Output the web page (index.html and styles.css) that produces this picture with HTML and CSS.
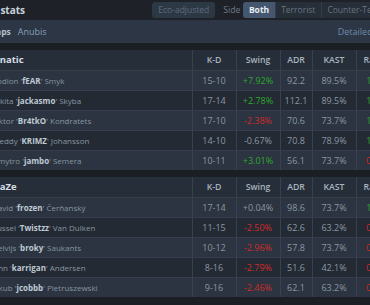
FILE: index.html
```html
<!DOCTYPE html>
<html>
<head>
<meta charset="utf-8">
<link rel="stylesheet" href="styles.css">
</head>
<body>
<div class="page">
  <div class="topbar">
    <div class="title">Map stats</div>
    <div class="controls">
      <span class="eco">Eco-adjusted</span>
      <span class="side">Side</span>
      <div class="group">
        <span class="seg active">Both</span>
        <span class="seg">Terrorist</span>
        <span class="seg">Counter-Terrorist</span>
      </div>
    </div>
  </div>
  <div class="mapsrow">
    <span class="maps-label">Maps</span>
    <span class="map">Anubis</span>
    <span class="detailed">Detailed stats</span>
  </div>
  <div class="gap"></div>
  <table class="team">
    <colgroup><col class="c-name"><col class="c-w"><col class="c-w"><col class="c-adr"><col class="c-w"><col class="c-w"></colgroup>
    <tr class="head"><th class="teamname">Fnatic</th><th>K-D</th><th>Swing</th><th>ADR</th><th>KAST</th><th class="rating">Rating 3.0</th></tr>
    <tr class="light"><td class="name">Rodion '<b>fEAR</b>' Smyk</td><td>15-10</td><td class="pos">+7.92%</td><td>92.2</td><td>89.5%</td><td class="rating pos">1.42</td></tr>
    <tr class="dark"><td class="name">Nikita '<b>jackasmo</b>' Skyba</td><td>17-14</td><td class="pos">+2.78%</td><td>112.1</td><td>89.5%</td><td class="rating pos">1.31</td></tr>
    <tr class="light"><td class="name">Viktor '<b>Br4tkO</b>' Kondratets</td><td>17-10</td><td class="neg">-2.38%</td><td>70.6</td><td>73.7%</td><td class="rating pos">1.18</td></tr>
    <tr class="dark"><td class="name">Freddy '<b>KRIMZ</b>' Johansson</td><td>14-10</td><td>-0.67%</td><td>70.8</td><td>78.9%</td><td class="rating pos">1.12</td></tr>
    <tr class="light"><td class="name">Dmytro '<b>jambo</b>' Semera</td><td>10-11</td><td class="pos">+3.01%</td><td>56.1</td><td>73.7%</td><td class="rating neg">0.95</td></tr>
  </table>
  <div class="gap"></div>
  <table class="team">
    <colgroup><col class="c-name"><col class="c-w"><col class="c-w"><col class="c-adr"><col class="c-w"><col class="c-w"></colgroup>
    <tr class="head"><th class="teamname">FaZe</th><th>K-D</th><th>Swing</th><th>ADR</th><th>KAST</th><th class="rating">Rating 3.0</th></tr>
    <tr class="light"><td class="name">David '<b>frozen</b>' Čerňanský</td><td>17-14</td><td>+0.04%</td><td>98.6</td><td>73.7%</td><td class="rating pos">1.08</td></tr>
    <tr class="dark"><td class="name">Russel '<b>Twistzz</b>' Van Dulken</td><td>11-15</td><td class="neg">-2.50%</td><td>62.6</td><td>63.2%</td><td class="rating neg">0.88</td></tr>
    <tr class="light"><td class="name">Helvijs '<b>broky</b>' Saukants</td><td>10-12</td><td class="neg">-2.96%</td><td>57.8</td><td>73.7%</td><td class="rating neg">0.86</td></tr>
    <tr class="dark"><td class="name">Finn '<b>karrigan</b>' Andersen</td><td>8-16</td><td class="neg">-2.79%</td><td>51.6</td><td>42.1%</td><td class="rating neg">0.62</td></tr>
    <tr class="light"><td class="name">Jakub '<b>jcobbb</b>' Pietruszewski</td><td>9-16</td><td class="neg">-2.46%</td><td>62.1</td><td>63.2%</td><td class="rating neg">0.74</td></tr>
  </table>
</div>
</body>
</html>
```
FILE: styles.css
```css
html, body {
  margin: 0;
  padding: 0;
  background: #1b1f24;
  overflow: hidden;
}
body {
  width: 370px;
  height: 305px;
  font-family: "Open Sans", "DejaVu Sans", sans-serif;
}
.page {
  margin-left: -28px;
  width: 430px;
}
.topbar {
  height: 20px;
  background: #1e2228;
  display: flex;
  align-items: center;
  padding: 0 0 0 4px;
  box-sizing: border-box;
}
.title {
  color: #c9d1da;
  font-weight: 700;
  font-size: 10px;
}
.controls {
  margin-left: auto;
  display: flex;
  align-items: center;
}
.eco {
  background: #2d3845;
  color: #5e6d7d;
  font-size: 8.5px;
  height: 16px;
  line-height: 16px;
  padding: 0 6px;
  border-radius: 3px;
}
.side {
  color: #6d7a87;
  font-size: 8.7px;
  margin: 0 3px 0 8px;
}
.group {
  display: flex;
  background: #262e38;
  border-radius: 3px;
  height: 16px;
  overflow: hidden;
}
.seg {
  color: #66737f;
  font-size: 8.5px;
  line-height: 16px;
  padding: 0 5.5px;
  border-left: 1px solid #343d48;
}
.seg.active {
  background: #44576f;
  color: #e6ecf2;
  font-weight: 700;
  border-left: none;
}
.mapsrow {
  height: 23px;
  background: #2c3644;
  display: flex;
  align-items: center;
  padding: 0 7px 0 16px;
  font-size: 9px;
}
.maps-label {
  color: #b3c0ce;
  font-weight: 700;
  font-size: 8.5px;
  margin-right: 7px;
}
.map {
  color: #8aa0b8;
}
.detailed {
  margin-left: auto;
  color: #6f8cad;
  font-size: 9px;
}
.gap {
  height: 7px;
  background: #1b1f24;
}
.team {
  border-collapse: collapse;
  table-layout: fixed;
  width: 428px;
}
.c-name { width: 220px; }
.c-w { width: 44px; }
.c-adr { width: 32px; }
.team th, .team td {
  height: 20px;
  padding: 0;
  box-sizing: border-box;
  text-align: center;
  white-space: nowrap;
  overflow: hidden;
  border-left: 1px solid #38414d;
  font-size: 9px;
  color: #8c97a3;
}
.team tr + tr td {
  border-top: 1px solid #353e4a;
}
.head th {
  background: #262e39;
  color: #a9b4bf;
  font-weight: 600;
  font-size: 8.7px;
}
.head th.teamname {
  text-align: left;
  padding-left: 22.5px;
  color: #d6dde5;
  font-weight: 700;
  font-size: 9.5px;
  border-left: none;
}
.light td { background: #2b3440; }
.dark td { background: #232a33; }
.team td.name {
  text-align: left;
  padding-left: 20px;
  font-size: 8px;
  color: #8995a2;
  border-left: none;
}
.name b {
  color: #bfc9d4;
  font-weight: 700;
}
.team td.pos { color: #2ea82e; }
.team td.neg { color: #d02a2e; }
.team .rating { padding-right: 6px; }
.team th.rating { padding-right: 0; padding-left: 7px; }
```
